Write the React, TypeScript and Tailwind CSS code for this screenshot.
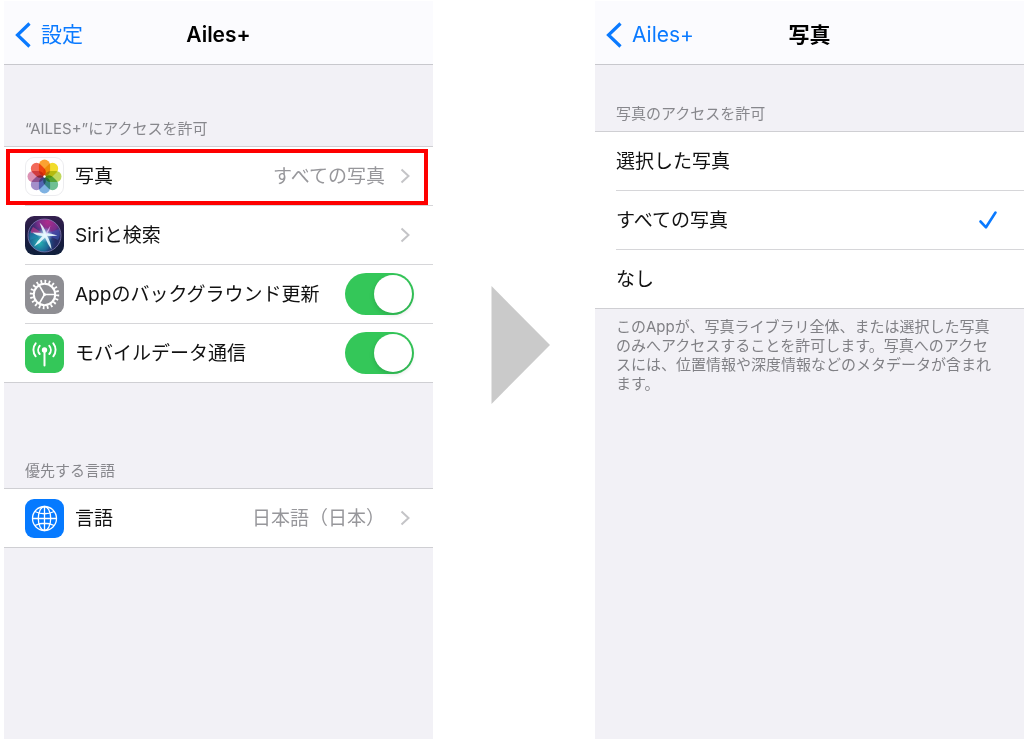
import React, { useState } from "react";

const PETALS = [
  { angle: 0, color: "#fba232" },
  { angle: 45, color: "#f1dc2c" },
  { angle: 90, color: "#c0d85c" },
  { angle: 135, color: "#6fbf93" },
  { angle: 180, color: "#7fb2e2" },
  { angle: 225, color: "#a48fca" },
  { angle: 270, color: "#dc92b4" },
  { angle: 315, color: "#f26a5a" },
];

function PhotosIcon() {
  return (
    <svg viewBox="0 0 39 39" className="size-[39px] shrink-0" aria-hidden="true">
      <rect x="0.5" y="0.5" width="38" height="38" rx="8.5" fill="#fff" stroke="#ececef" />
      <g className="isolate">
        {PETALS.map((p) => (
          <rect
            key={p.angle}
            x="13.9"
            y="2.5"
            width="11.2"
            height="16.6"
            rx="5.6"
            fill={p.color}
            transform={`rotate(${p.angle} 19.5 19.5)`}
            className="mix-blend-multiply"
          />
        ))}
      </g>
      <circle cx="19.5" cy="19.5" r="1.2" fill="#fff" />
    </svg>
  );
}

function SiriIcon() {
  return (
    <svg viewBox="0 0 39 39" className="size-[39px] shrink-0" aria-hidden="true">
      <defs>
        <linearGradient id="siriBack" x1="0.5" y1="0" x2="0.5" y2="1">
          <stop offset="0" stopColor="#35204f" />
          <stop offset="0.5" stopColor="#1b1b40" />
          <stop offset="1" stopColor="#10203c" />
        </linearGradient>
        <radialGradient id="siriPink" cx="0.6" cy="0.1" r="0.6">
          <stop offset="0" stopColor="#b02a8c" />
          <stop offset="0.5" stopColor="#8c2f94" stopOpacity="0.8" />
          <stop offset="1" stopColor="#4a2a80" stopOpacity="0" />
        </radialGradient>
        <radialGradient id="siriTeal" cx="0.35" cy="0.72" r="0.5">
          <stop offset="0" stopColor="#25b9b4" />
          <stop offset="0.55" stopColor="#1b7fa8" stopOpacity="0.75" />
          <stop offset="1" stopColor="#203a80" stopOpacity="0" />
        </radialGradient>
        <radialGradient id="siriGlow">
          <stop offset="0" stopColor="#fff" />
          <stop offset="0.35" stopColor="#cdf1ff" stopOpacity="0.65" />
          <stop offset="1" stopColor="#7fb8ff" stopOpacity="0" />
        </radialGradient>
      </defs>
      <rect width="39" height="39" rx="9" fill="url(#siriBack)" />
      <circle cx="19.5" cy="19.5" r="16.5" fill="#252b62" />
      <circle cx="19.5" cy="19.5" r="16.5" fill="url(#siriPink)" />
      <circle cx="19.5" cy="19.5" r="16.5" fill="url(#siriTeal)" />
      <path d="M19 19 5 15Q3.500 19 5 24Z" fill="#1f8fb8" opacity="0.5" />
      <path d="M20 18 34 13Q36 19 33 24Z" fill="#3a5bc0" opacity="0.55" />
      <path d="M19 18 8 11Q5 15 6 17Z" fill="#d63a90" opacity="0.6" />
      <circle cx="19.500" cy="19.500" r="16.500" fill="none" stroke="#8d86bd" strokeWidth="1" opacity="0.7" />
      <circle cx="20" cy="19" r="8" fill="url(#siriGlow)" />
      <path
        d="M14.500 6.500Q19.500 11 21 17Q26 17 32.500 19.500Q26.500 20.500 22 19.800Q26 26 26.500 33.500Q22.500 28 20 21.500Q15.500 27 9 30.500Q12 25 17.500 20Q12 20 7.500 16.500Q13.500 16.500 18.500 17.500Q16.500 12 14.500 6.500Z"
        fill="#e9fbff"
        opacity="0.9"
      />
      <path d="M20.500 18Q23 13 25.500 9.500Q25 14 21.500 18.500Z" fill="#e9c8ff" opacity="0.7" />
    </svg>
  );
}

function GearIcon() {
  return (
    <svg viewBox="0 0 39 39" className="size-[39px] shrink-0" aria-hidden="true">
      <rect width="39" height="39" rx="9" fill="#8e8e93" />
      <g fill="none" stroke="#fff">
        <circle cx="19.500" cy="19.500" r="10.700" strokeWidth="2" />
        <circle cx="19.500" cy="19.500" r="13" strokeWidth="3.400" pathLength="40" strokeDasharray="0.850 1.150" />
        <path d="M19.500 19.500H30M19.500 19.500 14.250 10.400M19.500 19.500 14.250 28.600" strokeWidth="1.600" />
      </g>
      <circle cx="19.500" cy="19.500" r="1.500" fill="#fff" />
    </svg>
  );
}

function AntennaIcon() {
  return (
    <svg viewBox="0 0 39 39" className="size-[39px] shrink-0" aria-hidden="true">
      <rect width="39" height="39" rx="9" fill="#34c759" />
      <g fill="none" stroke="#fff" strokeWidth="1.900" strokeLinecap="round">
        <path d="M19.500 16V31.500" strokeWidth="2" />
        <path d="M14.700 11.800A6.200 6.200 0 0 0 14.700 20M24.300 11.800A6.200 6.200 0 0 1 24.300 20" />
        <path d="M10.700 9.300A10.400 10.400 0 0 0 10.700 22.300M28.300 9.300A10.400 10.400 0 0 1 28.300 22.300" />
      </g>
      <circle cx="19.500" cy="16" r="2.700" fill="#fff" />
    </svg>
  );
}

function GlobeIcon() {
  return (
    <svg viewBox="0 0 39 39" className="size-[39px] shrink-0" aria-hidden="true">
      <rect width="39" height="39" rx="9" fill="#067aff" />
      <g fill="none" stroke="#fff" strokeWidth="1.300">
        <circle cx="19.500" cy="19.500" r="12" />
        <ellipse cx="19.500" cy="19.500" rx="6.200" ry="12" />
        <path d="M19.500 7.500V31.500M7.500 19.500H31.500M9.800 12.500Q19.500 17 29.200 12.500M9.800 26.500Q19.500 22 29.200 26.500" />
      </g>
    </svg>
  );
}

function Chevron() {
  return (
    <svg viewBox="0 0 10 16" className="h-4 w-[10px] shrink-0" aria-hidden="true">
      <path d="M1.500 1.500 8.500 8 1.500 14.500" fill="none" stroke="#c4c4c7" strokeWidth="2" />
    </svg>
  );
}

function NavBar({ back, title }: { back: string; title: string }) {
  return (
    <header className="grid h-16 grid-cols-[1fr_auto_1fr] items-center border-b border-[#c8c8cd] bg-[#fbfbfe] px-[11px] pt-[5px]">
      <a href="#back" className="flex items-center gap-[10px] text-[21px] leading-7 text-[#0a7aff]">
        <svg viewBox="0 0 16 26" className="h-[26px] w-4" aria-hidden="true">
          <path d="M14.500 1.500 2.500 13 14.500 24.500" fill="none" stroke="currentColor" strokeWidth="3.200" />
        </svg>
        {back}
      </a>
      <h1 className="text-[21px] leading-7 font-semibold text-black">{title}</h1>
    </header>
  );
}

function GroupLabel({ children, className }: { children: React.ReactNode; className: string }) {
  return (
    <h2 className={`flex items-end pb-[7px] pl-[21px] text-[15px] leading-5 text-[#87878c] ${className}`}>
      {children}
    </h2>
  );
}

function Group({ children }: { children: React.ReactNode }) {
  return (
    <ul className="divide-y divide-[#d6d6d9] border-y border-[#cfcfd3] bg-white pl-[21px]">{children}</ul>
  );
}

function LinkRow(props: { icon: React.ReactNode; label: string; value?: string; highlighted?: boolean }) {
  return (
    <li className="relative">
      <a href="#detail" className="flex h-[58px] items-center gap-[11px] pr-[23px] text-[19px]">
        {props.icon}
        <span className="flex-1 pt-[3px] text-[#111]">{props.label}</span>
        {props.value && <span className="mr-1 pt-[3px] text-[#97979b]">{props.value}</span>}
        <Chevron />
      </a>
      {props.highlighted && (
        <span className="pointer-events-none absolute top-[2px] right-[5px] bottom-0 -left-[19px] border-4 border-[#fe0000]" />
      )}
    </li>
  );
}

function SwitchRow({ icon, label }: { icon: React.ReactNode; label: string }) {
  const [on, setOn] = useState(true);
  return (
    <li>
      <label className="flex h-[58px] items-center gap-[11px] pr-[19px] text-[19px] text-[#111]">
        {icon}
        <span className="flex-1 pt-[3px]">{label}</span>
        <input
          type="checkbox"
          role="switch"
          checked={on}
          onChange={() => setOn(!on)}
          className="flex h-[42px] w-[69px] shrink-0 appearance-none items-center rounded-full bg-[#e9e9ea] p-[2px] before:size-[38px] before:rounded-full before:bg-white before:shadow-[0_2px_5px_rgba(0,0,0,0.15)] checked:justify-end checked:bg-[#34c759]"
        />
      </label>
    </li>
  );
}

const OPTIONS = ["選択した写真", "すべての写真", "なし"];

export default function App() {
  const [access, setAccess] = useState("すべての写真");
  return (
    <main
      className="flex min-h-screen bg-white pt-px pl-1 font-['Inter','Noto_Sans_CJK_JP',sans-serif]"
      lang="ja"
    >
      <section className="min-w-0 flex-1 bg-[#f2f1f6]">
        <NavBar back="設定" title="Ailes+" />
        <GroupLabel className="h-[81px]">“AILES+”にアクセスを許可</GroupLabel>
        <Group>
          <LinkRow icon={<PhotosIcon />} label="写真" value="すべての写真" highlighted />
          <LinkRow icon={<SiriIcon />} label="Siriと検索" />
          <SwitchRow icon={<GearIcon />} label="Appのバックグラウンド更新" />
          <SwitchRow icon={<AntennaIcon />} label="モバイルデータ通信" />
        </Group>
        <GroupLabel className="h-[105px]">優先する言語</GroupLabel>
        <Group>
          <LinkRow icon={<GlobeIcon />} label="言語" value="日本語（日本）" />
        </Group>
      </section>

      <div className="w-[162px] shrink-0 pt-[285px] pl-[58px]">
        <svg viewBox="0 0 59 118" className="h-[118px] w-[59px]" aria-hidden="true">
          <path d="M0.500 0 59 59 0.500 118Z" fill="#cacaca" />
        </svg>
      </div>

      <section className="min-w-0 flex-1 bg-[#f2f1f6]">
        <NavBar back="Ailes+" title="写真" />
        <GroupLabel className="h-[66px]">写真のアクセスを許可</GroupLabel>
        <Group>
          {OPTIONS.map((option) => (
            <li key={option}>
              <label className="flex h-[58px] items-center justify-between pr-[26px] text-[19px] text-[#111]">
                <span className="pt-[2px]">{option}</span>
                <input
                  type="radio"
                  name="access"
                  value={option}
                  checked={access === option}
                  onChange={() => setAccess(option)}
                  className="peer sr-only"
                />
                <svg viewBox="0 0 20 20" className="hidden size-5 peer-checked:block" aria-hidden="true">
                  <path
                    d="M2.500 11.500 8 17.300 17.500 2.500"
                    fill="none"
                    stroke="#0a7aff"
                    strokeWidth="2.600"
                    strokeLinecap="round"
                    strokeLinejoin="round"
                  />
                </svg>
              </label>
            </li>
          ))}
        </Group>
        <p className="pt-2 pr-7 pl-[21px] text-[15px] leading-[19px] text-[#808085]">
          このAppが、写真ライブラリ全体、または選択した写真のみへアクセスすることを許可します。写真へのアクセスには、位置情報や深度情報などのメタデータが含まれます。
        </p>
      </section>
    </main>
  );
}
